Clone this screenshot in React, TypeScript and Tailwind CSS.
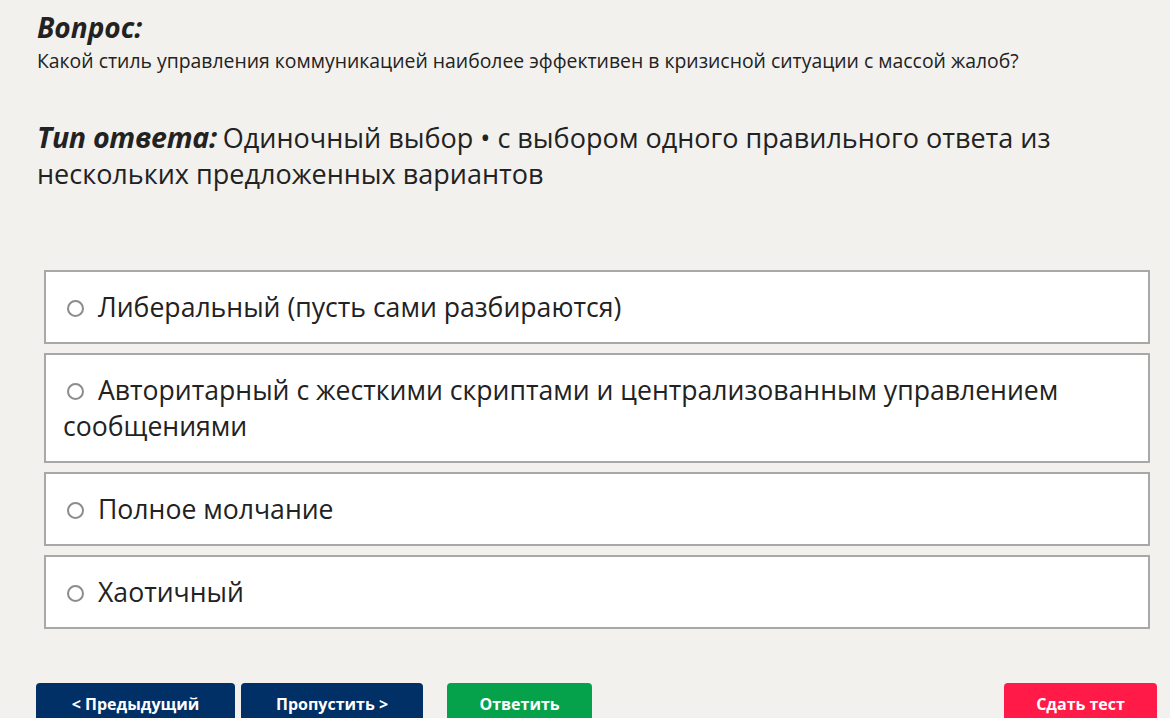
const options = [
  "Либеральный (пусть сами разбираются)",
  "Авторитарный с жесткими скриптами и централизованным управлением сообщениями",
  "Полное молчание",
  "Хаотичный",
];

export default function App() {
  return (
    <div
      className="w-[1170px] h-[718px] overflow-hidden bg-[#f2f1ee] text-[#222]"
      style={{ fontFamily: '"Open Sans", "Noto Sans", sans-serif' }}
    >
      <div className="pl-[37px] pr-[40px] pt-[8px]">
        <h2 className="text-[28px] font-bold italic leading-[38px]">Вопрос:</h2>
        <p className="text-[19.4px] leading-[24px] mt-[3px] whitespace-nowrap">
          Какой стиль управления коммуникацией наиболее эффективен в кризисной ситуации с массой жалоб?
        </p>
        <p className="mt-[46px] text-[27px] leading-[36px] pr-[40px]">
          <span className="font-bold italic text-[28.6px] tracking-[-0.3px] mr-[6px]">Тип ответа:</span>Одиночный выбор • с выбором одного
          правильного ответа из нескольких предложенных вариантов
        </p>
      </div>

      <div className="ml-[44px] w-[1106px] mt-[78px] flex flex-col gap-[9px]">
        {options.map((o) => (
          <label
            key={o}
            className="block bg-white border-2 border-[#a8a8a8] pl-[17px] pr-[20px] py-[17px] text-[26.6px] leading-[36px] text-[#222]"
          >
            <span className="inline-block w-[17px] h-[17px] rounded-full border-2 border-[#8c8c8c] mr-[14px] ml-[4px] align-[0px]" />
            {o}
          </label>
        ))}
      </div>

      <div className="flex mt-[54px] pl-[36px] pr-[13px] items-start">
        <button className="w-[199px] h-[42px] rounded-[4px] bg-[#003066] text-white font-bold text-[16px]">
          &lt; Предыдущий
        </button>
        <button className="ml-[6px] w-[182px] h-[42px] rounded-[4px] bg-[#003066] text-white font-bold text-[16px]">
          Пропустить &gt;
        </button>
        <button className="ml-[24px] w-[145px] h-[42px] rounded-[4px] bg-[#06a24b] text-white font-bold text-[16px]">
          Ответить
        </button>
        <button className="ml-auto w-[153px] h-[42px] rounded-[4px] bg-[#ff1a48] text-white font-bold text-[16px]">
          Сдать тест
        </button>
      </div>
    </div>
  );
}
